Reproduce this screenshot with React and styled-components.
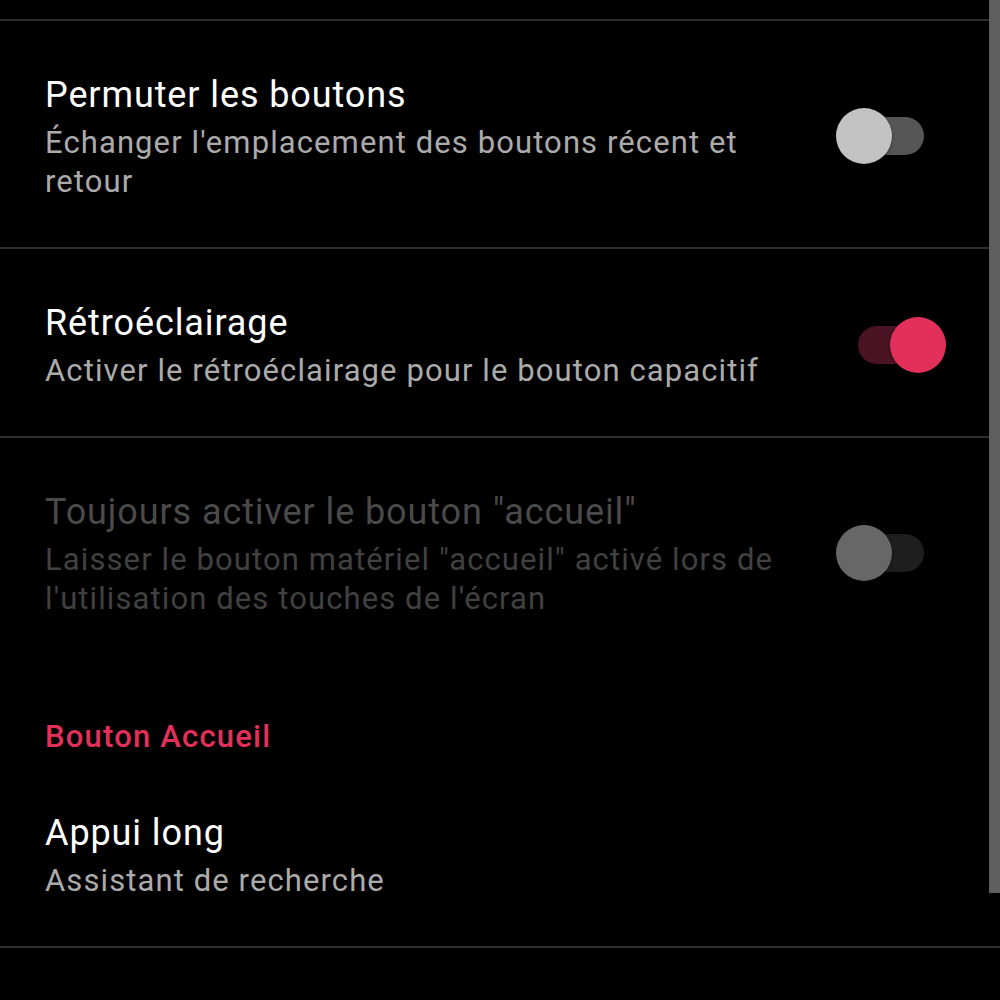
import React from "react";
import styled, { createGlobalStyle } from "styled-components";

const items = [
  {
    title: "Permuter les boutons",
    summary: "Échanger l'emplacement des boutons récent et retour",
    checked: false,
  },
  {
    title: "Rétroéclairage",
    summary: "Activer le rétroéclairage pour le bouton capacitif",
    checked: true,
  },
  {
    title: 'Toujours activer le bouton "accueil"',
    summary:
      'Laisser le bouton matériel "accueil" activé lors de l\'utilisation des touches de l\'écran',
    checked: false,
    disabled: true,
    last: true,
  },
];

const Settings = () => {
  return (
    <Screen>
      <GlobalStyle />
      <Divider />
      {items.map((item) => (
        <Preference key={item.title} $noBorder={item.last}>
          <TextBlock>
            <Title $disabled={item.disabled}>{item.title}</Title>
            <Summary $disabled={item.disabled}>{item.summary}</Summary>
          </TextBlock>
          <SwitchArea>
            <Track $checked={item.checked} $disabled={item.disabled}>
              <Thumb $checked={item.checked} $disabled={item.disabled} />
            </Track>
          </SwitchArea>
        </Preference>
      ))}
      <Category>Bouton Accueil</Category>
      <Preference>
        <TextBlock>
          <Title>Appui long</Title>
          <Summary>Assistant de recherche</Summary>
        </TextBlock>
      </Preference>
      <ScrollBar />
    </Screen>
  );
};

export default function App() {
  return <Settings />;
}

const GlobalStyle = createGlobalStyle`
  html, body {
    margin: 0;
    padding: 0;
    background: #000;
  }
  body {
    font-family: Roboto, "Noto Sans", sans-serif;
  }
`;

const Screen = styled.div`
  position: relative;
  width: 1000px;
  height: 1000px;
  overflow: hidden;
  background: #000;
  padding-top: 19px;
  box-sizing: border-box;
`;

const Divider = styled.div`
  height: 2px;
  background: #2e2e2e;
`;

const Preference = styled.div`
  display: flex;
  align-items: center;
  padding: 50px 0 46px 45px;
  border-bottom: ${(p) => (p.$noBorder ? "none" : "2px solid #2e2e2e")};
`;

const TextBlock = styled.div`
  flex: 1;
  padding-right: 36px;
`;

const Title = styled.div`
  font-size: 36px;
  letter-spacing: 0.9px;
  line-height: 48px;
  color: ${(p) => (p.$disabled ? "#4a4a4a" : "#ffffff")};
`;

const Summary = styled.div`
  margin-top: 4px;
  font-size: 31px;
  letter-spacing: 1.1px;
  line-height: 39px;
  color: ${(p) => (p.$disabled ? "#414141" : "#ababab")};
`;

const SwitchArea = styled.div`
  width: 110px;
  margin-right: 54px;
  display: flex;
  justify-content: flex-end;
  padding-right: 22px;
  box-sizing: border-box;
`;

const Track = styled.div`
  position: relative;
  width: 66px;
  height: 38px;
  border-radius: 19px;
  background: ${(p) =>
    p.$disabled ? "#1e1e1e" : p.$checked ? "#4a1424" : "#565656"};
`;

const Thumb = styled.div`
  position: absolute;
  top: -9px;
  left: ${(p) => (p.$checked ? "32px" : "-22px")};
  width: 56px;
  height: 56px;
  border-radius: 50%;
  background: ${(p) =>
    p.$disabled ? "#676767" : p.$checked ? "#e2305a" : "#c2c2c2"};
  box-shadow: 0 1px 3px rgba(0, 0, 0, 0.5);
`;

const Category = styled.div`
  margin-top: 53px;
  padding-left: 45px;
  font-size: 31px;
  letter-spacing: 1.2px;
  font-weight: 500;
  line-height: 40px;
  color: #e2305a;
  margin-bottom: 2px;
`;

const ScrollBar = styled.div`
  position: absolute;
  top: 0;
  right: 0;
  width: 11px;
  height: 893px;
  background: #5e5e5e;
`;
